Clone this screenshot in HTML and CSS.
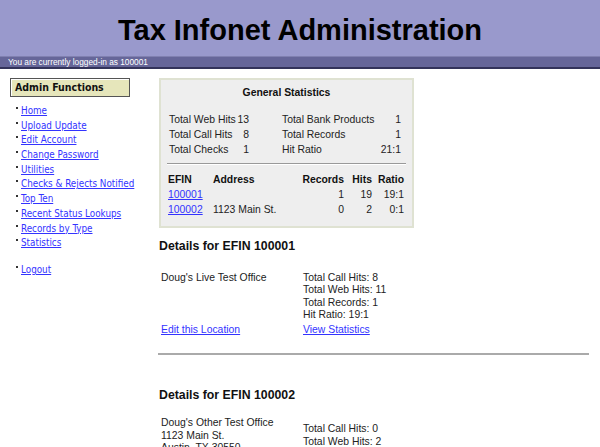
FILE: index.html
```html
<!DOCTYPE html>
<html>
<head>
<meta charset="utf-8">
<title>Tax Infonet Administration</title>
<link rel="stylesheet" href="styles.css">
</head>
<body>
<header class="header"><h1 class="title">Tax Infonet Administration</h1></header>
<div class="userbar">You are currently logged-in as 100001</div>
<div class="main">
  <nav class="sidebar">
    <div class="side-title">Admin Functions</div>
    <ul class="menu">
      <li><a href="#">Home</a></li>
      <li><a href="#">Upload Update</a></li>
      <li><a href="#">Edit Account</a></li>
      <li><a href="#">Change Password</a></li>
      <li><a href="#">Utilities</a></li>
      <li><a href="#">Checks &amp; Rejects Notified</a></li>
      <li><a href="#">Top Ten</a></li>
      <li><a href="#">Recent Status Lookups</a></li>
      <li><a href="#">Records by Type</a></li>
      <li><a href="#">Statistics</a></li>
    </ul>
    <ul class="menu logout">
      <li><a href="#">Logout</a></li>
    </ul>
  </nav>
  <section class="content">
    <div class="statbox">
      <div class="stat-title">General Statistics</div>
      <div class="stat-grid">
        <span>Total Web Hits</span><span class="num">13</span><span class="lbl2">Total Bank Products</span><span class="num">1</span>
        <span>Total Call Hits</span><span class="num">8</span><span class="lbl2">Total Records</span><span class="num">1</span>
        <span>Total Checks</span><span class="num">1</span><span class="lbl2">Hit Ratio</span><span class="num">21:1</span>
      </div>
      <hr class="stat-rule">
      <table class="efin">
        <colgroup>
          <col class="c-efin"><col><col class="c-rec"><col class="c-hits"><col class="c-ratio">
        </colgroup>
        <thead>
          <tr><th class="l">EFIN</th><th class="l">Address</th><th>Records</th><th>Hits</th><th>Ratio</th></tr>
        </thead>
        <tbody>
          <tr><td class="l"><a href="#">100001</a></td><td class="l"></td><td>1</td><td>19</td><td>19:1</td></tr>
          <tr><td class="l"><a href="#">100002</a></td><td class="l">1123 Main St.</td><td>0</td><td>2</td><td>0:1</td></tr>
        </tbody>
      </table>
    </div>

    <div class="details first">
      <h3 class="det-title">Details for EFIN 100001</h3>
      <div class="det-grid">
        <div class="det-addr">Doug's Live Test Office</div>
        <div class="det-stats">Total Call Hits: 8<br>Total Web Hits: 11<br>Total Records: 1<br>Hit Ratio: 19:1</div>
        <a href="#">Edit this Location</a>
        <a href="#">View Statistics</a>
      </div>
    </div>

    <hr class="sep">

    <div class="details second">
      <h3 class="det-title">Details for EFIN 100002</h3>
      <div class="det-grid">
        <div class="det-addr">Doug's Other Test Office<br>1123 Main St.<br>Austin, TX 30550</div>
        <div class="det-stats">Total Call Hits: 0<br>Total Web Hits: 2<br>Total Records: 0<br>Hit Ratio: 0:1</div>
        <a href="#">Edit this Location</a>
        <a href="#">View Statistics</a>
      </div>
    </div>
  </section>
</div>
</body>
</html>
```

FILE: styles.css
```css
html, body {
  margin: 0;
  padding: 0;
  background: #ffffff;
  font-family: "Liberation Sans", Arial, sans-serif;
  font-size: 10.4px;
  color: #222222;
}

.header {
  background: #9999cc;
  height: 56px;
  display: flex;
  align-items: center;
  justify-content: center;
}

.title {
  margin: 0;
  font-size: 29px;
  font-weight: bold;
  color: #000000;
  padding-top: 4px;
}

.userbar {
  background: #666699;
  border-top: 1px solid #8080b0;
  border-bottom: 2px solid #33335a;
  color: #ffffff;
  font-size: 8.3px;
  height: 10px;
  line-height: 10px;
  padding-left: 8px;
}

.main {
  display: flex;
  padding-top: 9px;
}

.sidebar {
  width: 149px;
  padding-left: 10px;
  flex: none;
  font-family: "DejaVu Sans Condensed", "DejaVu Sans", Tahoma, sans-serif;
  font-stretch: condensed;
}

.side-title {
  width: 114px;
  height: 17px;
  line-height: 17px;
  background: #e6e6bb;
  border: 1px solid #555555;
  box-shadow: inset 1px 1px 0 #ffffff;
  font-weight: bold;
  font-size: 10.5px;
  padding-left: 4px;
  color: #111111;
}

.menu {
  list-style: none;
  margin: 7px 0 0 0;
  padding: 0;
}

.menu li {
  position: relative;
  padding-left: 11px;
  height: 14.7px;
  line-height: 14px;
  font-size: 9.8px;
}

.menu li::before {
  content: "";
  position: absolute;
  left: 6px;
  top: 3px;
  width: 2px;
  height: 2px;
  background: #333333;
}

.menu a {
  color: #3333ff;
  text-decoration: underline;
}

.logout {
  margin-top: 12px;
}

.content {
  flex: 1;
  padding-right: 11px;
}

.statbox {
  width: 239px;
  background: #eeeeee;
  border: 2px solid #dfe2d2;
  padding: 6px 6px 9px 6px;
}

.stat-title {
  text-align: center;
  font-weight: bold;
  line-height: 13px;
  margin-bottom: 13px;
  color: #111111;
}

.stat-grid {
  display: grid;
  grid-template-columns: 68px 12px 1fr auto;
  line-height: 15px;
  padding-left: 2px;
  padding-right: 5px;
  white-space: nowrap;
}

.stat-grid .num {
  text-align: right;
}

.stat-grid .lbl2 {
  padding-left: 33px;
}

.stat-rule {
  border: 0;
  border-top: 1px solid #999999;
  border-bottom: 1px solid #ffffff;
  margin: 6px 0 7px 0;
}

.efin {
  width: 100%;
  border-collapse: collapse;
  table-layout: fixed;
}

.c-efin { width: 45px; }
.c-rec { width: 60px; }
.c-hits { width: 28px; }
.c-ratio { width: 34px; }

.efin th, .efin td {
  padding: 0;
  text-align: right;
  height: 15px;
  line-height: 15px;
  white-space: nowrap;
}

.efin th:last-child, .efin td:last-child {
  padding-right: 2px;
}

.efin th {
  font-weight: bold;
  color: #111111;
}

.efin .l {
  text-align: left;
  padding-left: 1px;
}

.efin a {
  color: #3333ff;
}

.det-title {
  font-size: 12.3px;
  line-height: 15px;
  font-weight: bold;
  color: #111111;
}

.first .det-title {
  margin: 11px 0 18px 0;
}

.second .det-title {
  margin: 33px 0 14px 0;
}

.det-grid {
  display: grid;
  grid-template-columns: 142px 1fr;
  align-items: start;
  padding-left: 2px;
  line-height: 12.3px;
}

.second .det-stats {
  margin-top: 6px;
}

.det-grid a {
  color: #3333ff;
  margin-top: 3px;
}

.sep {
  border: 0;
  border-top: 2px solid #aaaaaa;
  margin: 17px 0 0 -1px;
}
```
